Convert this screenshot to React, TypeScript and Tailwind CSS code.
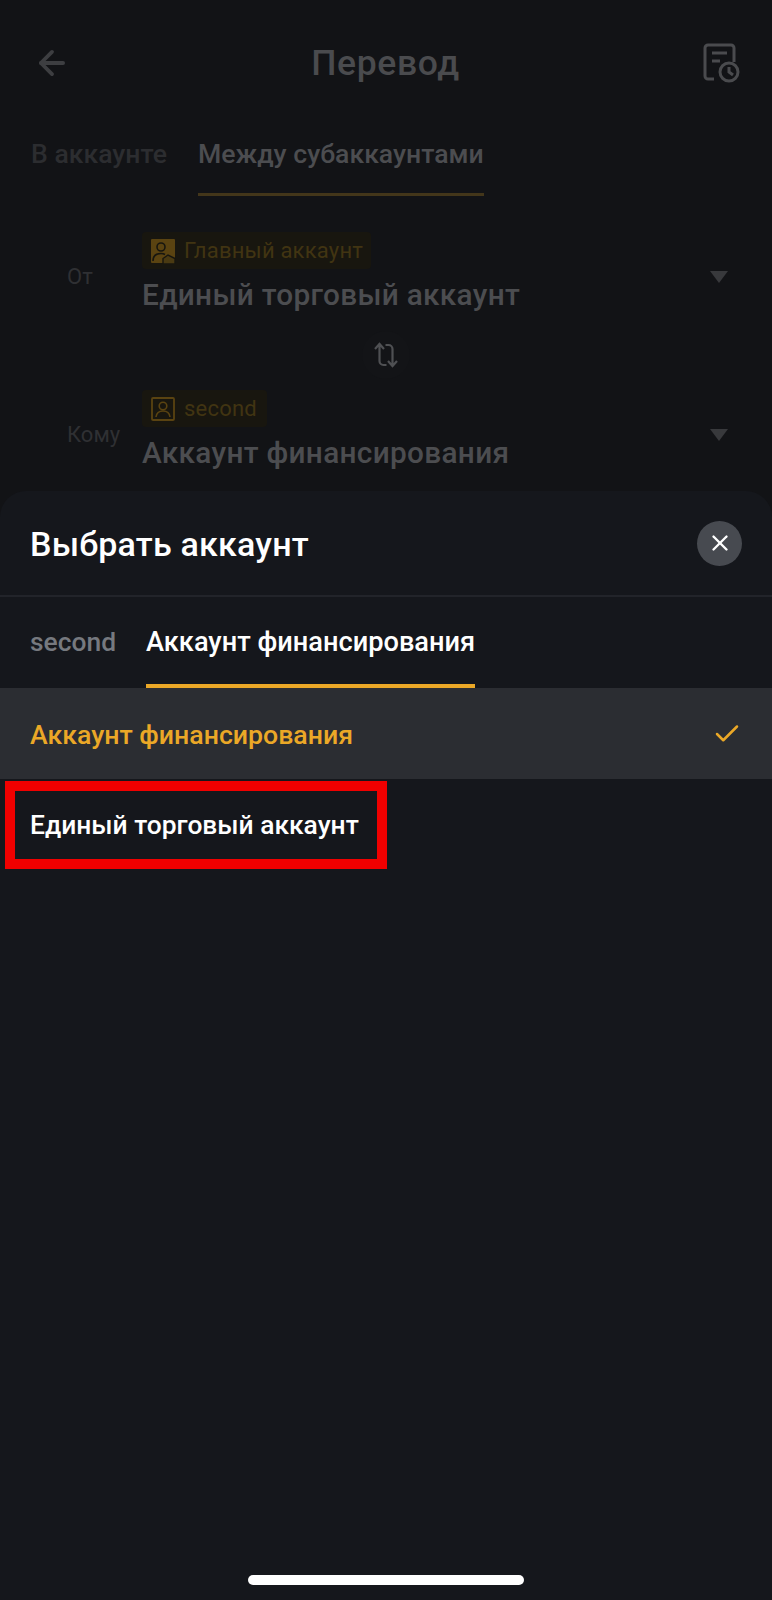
import { ArrowLeft, Check, X } from "lucide-react";

const font = "font-['Roboto','Noto_Sans',sans-serif]";

function Tag({ label, solid, width }: { label: string; solid?: boolean; width: string }) {
  return (
    <div className={`flex h-[37px] items-center gap-[8px] rounded-[4px] bg-[#18160f] pl-[8px] ${width}`}>
      <svg width="26" height="26" viewBox="0 0 26 26" fill="none">
        {solid ? (
          <>
            <rect x="1" y="1" width="24" height="24" rx="1" fill="#5a4311" />
            <circle cx="11" cy="9" r="4" stroke="#17160f" strokeWidth="1.6" />
            <path d="M3 23c0-5 3-7.500 8-7.500 2 0 3 .4 4 1" stroke="#17160f" strokeWidth="1.6" />
            <path d="M13 26v-5.500l5-3.500 7 3.500V26z" fill="#4a3a12" stroke="#17160f" strokeWidth="1.400" />
          </>
        ) : (
          <>
            <rect x="2" y="2" width="22" height="22" rx="1" stroke="#5a4311" strokeWidth="1.800" />
            <circle cx="13" cy="10" r="3.800" stroke="#5a4311" strokeWidth="1.600" />
            <path d="M6 21c.5-4 3-6 7-6s6.500 2 7 6" stroke="#5a4311" strokeWidth="1.600" />
          </>
        )}
      </svg>
      <span className="text-[22px] leading-none tracking-[0.2px] text-[#413412]">{label}</span>
    </div>
  );
}

function AccountRow({
  label,
  tag,
  solid,
  tagWidth,
  account,
}: {
  label: string;
  tag: string;
  solid?: boolean;
  tagWidth: string;
  account: string;
}) {
  return (
    <div className="flex items-center pl-[67px] pr-[44px]">
      <span className="w-[75px] pt-[6px] text-[22px] text-[#2f3033]">{label}</span>
      <div className="flex-1">
        <Tag label={tag} solid={solid} width={tagWidth} />
        <div className="mt-[7px] text-[29.800px] font-medium leading-[38px] tracking-[0.3px] text-[#4c4d50]">{account}</div>
      </div>
      <div className="mt-[7px] h-0 w-0 border-x-[9px] border-t-[12px] border-x-transparent border-t-[#38393c]" />
    </div>
  );
}

export default function App() {
  return (
    <div className={`${font} flex h-[1600px] w-[772px] flex-col overflow-hidden bg-[#121316]`}>
      {/* dimmed page behind the sheet */}
      <div className="h-[491px] shrink-0">
        <div className="flex items-center justify-between pl-[33px] pr-[30px] pt-[43px]">
          <ArrowLeft size={38} strokeWidth={2.4} className="text-[#3d3e41]" />
          <h1 className="text-[35.500px] font-medium leading-[40px] tracking-[0.6px] text-[#4a4b4e]">Перевод</h1>
          <svg width="42" height="40" viewBox="0 0 42 40" fill="none" stroke="#4a4b4e" strokeWidth="3">
            <path d="M14 36H8a3 3 0 0 1-3-3V5a3 3 0 0 1 3-3h23a3 3 0 0 1 3 3v14" />
            <path d="M12 10h15M12 18h8" />
            <circle cx="29" cy="29" r="9" />
            <path d="M29 24v5l4 3" />
          </svg>
        </div>
        <div className="mt-[45px] flex gap-[31px] pl-[31px]">
          <span className="h-[68px] pt-[10px] text-[26.600px] font-medium leading-[32px] text-[#2c2d30]">В аккаунте</span>
          <span className="h-[68px] border-b-[3px] border-[#43361a] pt-[10px] text-[26.600px] font-medium leading-[32px] text-[#4c4d50]">
            Между субаккаунтами
          </span>
        </div>
        <div className="mt-[36px]">
          <AccountRow label="От" tag="Главный аккаунт" solid tagWidth="w-[229px]" account="Единый торговый аккаунт" />
          <div className="mb-[11px] mt-[17px] flex justify-center">
            <div className="flex h-[48px] w-[48px] items-center justify-center rounded-full bg-[#131417]">
              <svg width="26" height="26" viewBox="0 0 26 26" fill="none" stroke="#4f5053" strokeWidth="2.200">
                <path d="M2 7l4.500-5L11 7M6.500 2v17a4 4 0 0 0 4 4h3" />
                <path d="M24 19l-4.500 5-4.500-5M19.500 24V7a4 4 0 0 0-4-4h-3" />
              </svg>
            </div>
          </div>
          <AccountRow label="Кому" tag="second" tagWidth="w-[125px]" account="Аккаунт финансирования" />
        </div>
      </div>

      {/* account picker sheet */}
      <div className="flex min-h-0 flex-1 flex-col rounded-t-[26px] bg-[#15171c]">
        <div className="flex h-[106px] shrink-0 items-center justify-between border-b-2 border-[#22242a] pl-[30px] pr-[30px]">
          <h2 className="pt-[3px] text-[34px] font-medium tracking-[0.2px] text-white">Выбрать аккаунт</h2>
          <button className="flex h-[45px] w-[45px] items-center justify-center rounded-full bg-[#474a50]">
            <X size={26} strokeWidth={2.2} className="text-white" />
          </button>
        </div>
        <div className="flex h-[91px] shrink-0 gap-[30px] pl-[30px]">
          <span className="pt-[29px] text-[26.400px] font-medium leading-[32px] text-[#76797f]">second</span>
          <span className="border-b-[4px] border-[#eba827] pt-[29px] text-[27.200px] font-medium leading-[32px] text-white">
            Аккаунт финансирования
          </span>
        </div>
        <div className="flex h-[91px] shrink-0 items-center justify-between bg-[#2b2d32] pl-[30px] pr-[30px]">
          <span className="pt-[3px] text-[26.700px] font-medium text-[#eba827]">Аккаунт финансирования</span>
          <Check size={30} strokeWidth={2} className="text-[#eba827]" />
        </div>
        <div className="ml-[5px] mt-[2px] flex h-[88px] w-[382px] items-center border-[10px] border-[#f00000] pl-[15px]">
          <span className="whitespace-nowrap pt-[1px] text-[26.400px] font-medium text-white">Единый торговый аккаунт</span>
        </div>
        <div className="mt-auto flex justify-center pb-[15px]">
          <div className="h-[10px] w-[276px] rounded-full bg-white" />
        </div>
      </div>
    </div>
  );
}
